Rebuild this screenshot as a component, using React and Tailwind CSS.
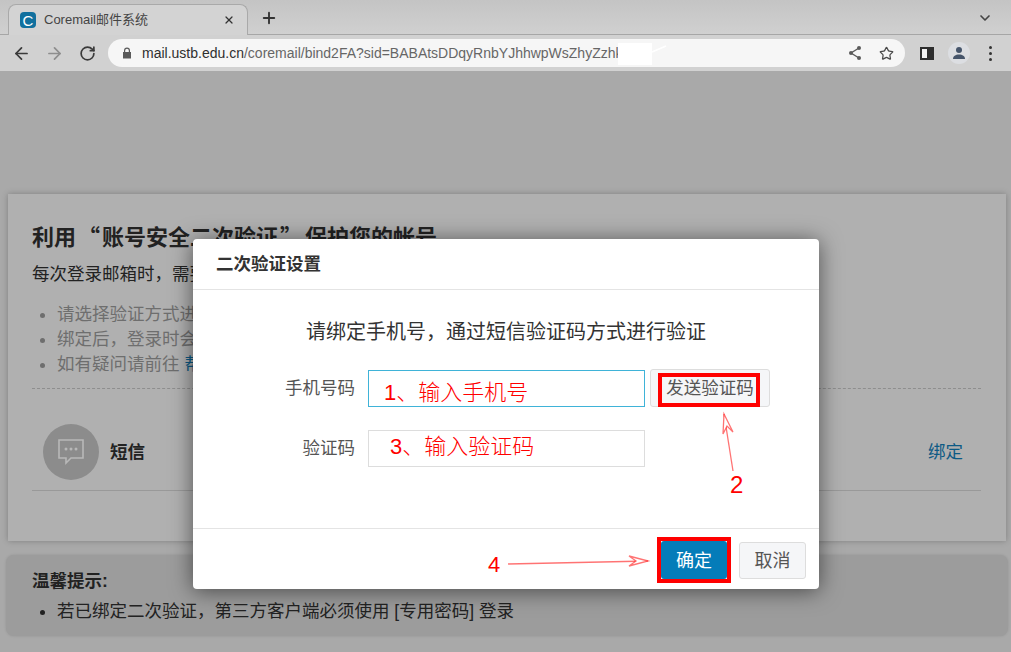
import React from 'react';
import { ArrowLeft, ArrowRight, RotateCw, Plus, X, ChevronDown, Star } from 'lucide-react';

const FONT = 'font-["Liberation_Sans","Noto_Sans_CJK_SC",sans-serif]';

const TabStrip = () => (
  <div className="flex h-[35px] items-end bg-gradient-to-b from-[#c4c4c4] to-[#d0d0d0] border-b border-[#a6a6a6] pl-2 relative">
    <div className="flex h-[31px] w-[240px] items-center rounded-t-lg border border-b-0 border-[#a9a9a9] bg-[#d3d3d3] pl-[11px] pr-2 -mb-px">
      <div className="flex h-4 w-4 items-center justify-center rounded-sm bg-[#11709e] text-[15px] leading-none text-white">C</div>
      <span className="ml-2 flex-1 truncate text-[13px] text-[#444444]">Coremail邮件系统</span>
      <X size={12} strokeWidth={2.5} className="mr-1 text-[#333333]" />
    </div>
    <Plus size={18} strokeWidth={2.5} className="mb-[7px] ml-3 text-[#333333]" />
    <ChevronDown size={16} strokeWidth={2.5} className="absolute right-[18px] top-[10px] text-[#444444]" />
  </div>
);

const Toolbar = () => (
  <div className="flex h-[36px] items-center bg-[#d1d1d1] pl-3">
    <ArrowLeft size={19} strokeWidth={2.2} className="text-[#3a3a3a]" />
    <ArrowRight size={19} strokeWidth={2.2} className="ml-[14px] text-[#8e8e8e]" />
    <RotateCw size={17} strokeWidth={2.4} className="ml-[15px] text-[#3a3a3a]" />
    <div className="relative ml-3 flex h-[28px] w-[797px] items-center rounded-full bg-[#f6f6f6] pl-[14px]">
      <svg width="10" height="12" viewBox="0 0 10 12" className="text-[#5a5a5a]">
        <path d="M2 5V3.5a3 3 0 0 1 6 0V5h1v6.5H1V5zm1.2 0h3.6V3.5a1.8 1.8 0 0 0-3.6 0z" fill="currentColor" />
      </svg>
      <div className="ml-[10px] whitespace-nowrap text-sm text-[#666666]">
        <span className="text-[#2f2f2f]">mail.ustb.edu.cn</span>/coremail/bind2FA?sid=BABAtsDDqyRnbYJhhwpWsZhyZzhk
      </div>
      <div className="absolute left-[510px] top-1 h-[22px] w-[34px] bg-white" />
      <svg width="16" height="8" viewBox="0 0 16 8" className="absolute left-[543px] top-[6px]">
        <path d="M1 7 15 1" stroke="#ffffff" strokeWidth="1.5" />
      </svg>
      <svg width="16" height="16" viewBox="0 0 16 16" className="absolute right-[42px] top-[6px] text-[#5a5a5a]">
        <path d="M12 3 4 8l8 5" fill="none" stroke="currentColor" strokeWidth="1.4" />
        <circle cx="12" cy="3" r="2" fill="currentColor" />
        <circle cx="4" cy="8" r="2" fill="currentColor" />
        <circle cx="12" cy="13" r="2" fill="currentColor" />
      </svg>
      <Star size={15} strokeWidth={2} className="absolute right-[11px] top-[6.5px] text-[#4a4a4a]" />
    </div>
    <div className="ml-[15px] flex h-[13px] w-[14px] border-2 border-[#2e2e2e] bg-[#f2f2f2]">
      <div className="ml-auto h-full w-[5px] bg-[#2e2e2e]" />
    </div>
    <div className="ml-[14px] flex h-[22px] w-[22px] items-center justify-center rounded-full bg-[#dcdee2]">
      <svg width="14" height="14" viewBox="0 0 14 14" className="text-[#46556b]">
        <circle cx="7" cy="4" r="3" fill="currentColor" />
        <path d="M1 13c0-3 2.5-4.5 6-4.5s6 1.5 6 4.5z" fill="currentColor" />
      </svg>
    </div>
    <div className="ml-[19px] flex flex-col gap-[3px]">
      <div className="h-[3px] w-[3px] rounded-full bg-[#333333]" />
      <div className="h-[3px] w-[3px] rounded-full bg-[#333333]" />
      <div className="h-[3px] w-[3px] rounded-full bg-[#333333]" />
    </div>
  </div>
);

const BindCard = () => (
  <div className="mx-2 h-[347px] w-[998px] bg-[#b0b0b0] pl-6 pr-[25px] pt-[26px] shadow-[0_0_6px_rgba(0,0,0,0.25)]">
    <h1 className="text-[22px] font-bold leading-[30px] text-[#222222]">
      利用<span className='ml-[2px] mr-[2px] font-["Noto_Sans_CJK_SC"]'>“</span>账号安全二次验证<span className='ml-[2px] mr-[3px] font-["Noto_Sans_CJK_SC"]'>”</span>保护您的帐号
    </h1>
    <p className="mt-[9px] text-[17.5px] leading-6 text-[#222222]">每次登录邮箱时，需要输入密码和验证码</p>
    <ul className="mt-[16px] list-disc pl-[25px] text-[17.5px] leading-[25px] text-[#6e6e6e] marker:text-[#6e6e6e]">
      <li>请选择验证方式进行绑定</li>
      <li>绑定后，登录时会进行二次验证</li>
      <li>如有疑问请前往 <span className="text-[#0d5a85]">帮助中心</span></li>
    </ul>
    <div className="mt-[11px] border-t border-dashed border-[#8e8e8e]" />
    <div className="flex h-[102px] items-start border-b border-[#999999] pl-[11px] pr-[18px] pt-[35px]">
      <div className="flex h-14 w-14 items-center justify-center rounded-full bg-[#8c8c8c]">
        <svg width="28" height="28" viewBox="0 0 28 28" className="text-[#b8b8b8]">
          <path d="M2 2h24v18H14l-5 5v-5H2z" fill="none" stroke="currentColor" strokeWidth="1.6" />
          <circle cx="9" cy="11" r="1.5" fill="currentColor" />
          <circle cx="14" cy="11" r="1.5" fill="currentColor" />
          <circle cx="19" cy="11" r="1.5" fill="currentColor" />
        </svg>
      </div>
      <span className="ml-[11px] flex-1 text-[17.5px] font-bold leading-[56px] text-[#222222]">短信</span>
      <span className="text-[17.5px] leading-[56px] text-[#0d5a85]">绑定</span>
    </div>
  </div>
);

const Notice = () => (
  <div className="mx-1.5 mt-[14px] h-[81px] w-[1002px] rounded-lg bg-[#9c9c9c] pl-[26px] pt-[14px] shadow-[0_0_3px_rgba(0,0,0,0.12)]">
    <div className="text-[17.5px] font-bold leading-6 text-[#222222]">温馨提示:</div>
    <ul className="mt-[6px] list-disc pl-[25px] text-[17.5px] leading-6 text-[#222222]">
      <li>若已绑定二次验证，第三方客户端必须使用 [专用密码] 登录</li>
    </ul>
  </div>
);

const Modal = () => (
  <div className="absolute left-[193px] top-[239px] flex h-[350px] w-[626px] flex-col rounded bg-white shadow-[0_2px_22px_rgba(0,0,0,0.55)]">
    <div className="flex h-[51px] items-center border-b border-[#e4e4e4] pl-[23px] text-[17.5px] font-bold text-[#333333]">二次验证设置</div>
    <div className="h-[238px]">
      <p className="mt-[28px] text-center text-xl leading-7 text-[#333333]">请绑定手机号，通过短信验证码方式进行验证</p>
      <div className="mt-[24px] flex items-start">
        <span className="mr-[13px] w-[162px] text-right text-[17.5px] leading-9 text-[#555555]">手机号码</span>
        <div className="h-[37px] w-[277px] border border-[#3fb3d8] pl-[15px] text-[22px] font-light leading-[43px] text-[#ff0000]">1、输入手机号</div>
        <div className="relative -mt-px ml-[5px] flex h-[38px] w-[120px] items-center justify-center rounded-[3px] border border-[#dddddd] bg-[#f5f6f8] text-[17.5px] text-[#555555]">
          发送验证码
          <div className="absolute left-[7px] top-[3px] h-[34px] w-[102px] border-4 border-[#ff0000]" />
        </div>
      </div>
      <div className="mt-[23px] flex items-start">
        <span className="mr-[13px] w-[162px] text-right text-[17.5px] leading-9 text-[#555555]">验证码</span>
        <div className="h-[37px] w-[277px] border border-[#dddddd] pl-[21px] text-[22px] font-light leading-[31px] text-[#ff0000]">3、输入验证码</div>
      </div>
    </div>
    <div className="flex flex-1 items-center justify-end gap-2 border-t border-[#e4e4e4] pr-[13px] pt-[2px]">
      <div className="flex h-[46px] w-[74px] items-center justify-center border-4 border-[#ff0000] bg-white">
        <div className="flex h-[38px] w-[66px] items-center justify-center rounded-[3px] bg-[#047cb9] pt-[2px] text-[18px] text-white">确定</div>
      </div>
      <div className="flex h-[37px] w-[67px] items-center justify-center rounded-[3px] border border-[#dddddd] bg-[#f5f6f8] pt-[2px] text-[18px] text-[#555555]">取消</div>
    </div>
  </div>
);

// красные пометки поверх скриншота
const Annotations = () => (
  <>
    <svg width="1011" height="652" className="pointer-events-none absolute left-0 top-0">
      <g fill="none" stroke="#ff0000" strokeOpacity="0.55" strokeWidth="1.3">
        <path d="M733 471 724 414" />
        <path d="M724 414 723 434 727 426 733 432z" fill="#ffffff" />
        <path d="M508 564 648 561" />
        <path d="M648 561 629 556 636 561 629 566z" fill="#ffffff" />
      </g>
    </svg>
    <span className="absolute left-[730px] top-[470px] text-2xl leading-[30px] text-[#ff0000]">2</span>
    <span className="absolute left-[488px] top-[550px] text-[22px] leading-[30px] text-[#ff0000]">4</span>
  </>
);

export default function App() {
  return (
    <div className={`relative h-[652px] w-[1011px] overflow-hidden bg-[#a9a9a9] ${FONT}`}>
      <TabStrip />
      <Toolbar />
      <div className="pt-[123px]">
        <BindCard />
        <Notice />
      </div>
      <Modal />
      <Annotations />
    </div>
  );
}
